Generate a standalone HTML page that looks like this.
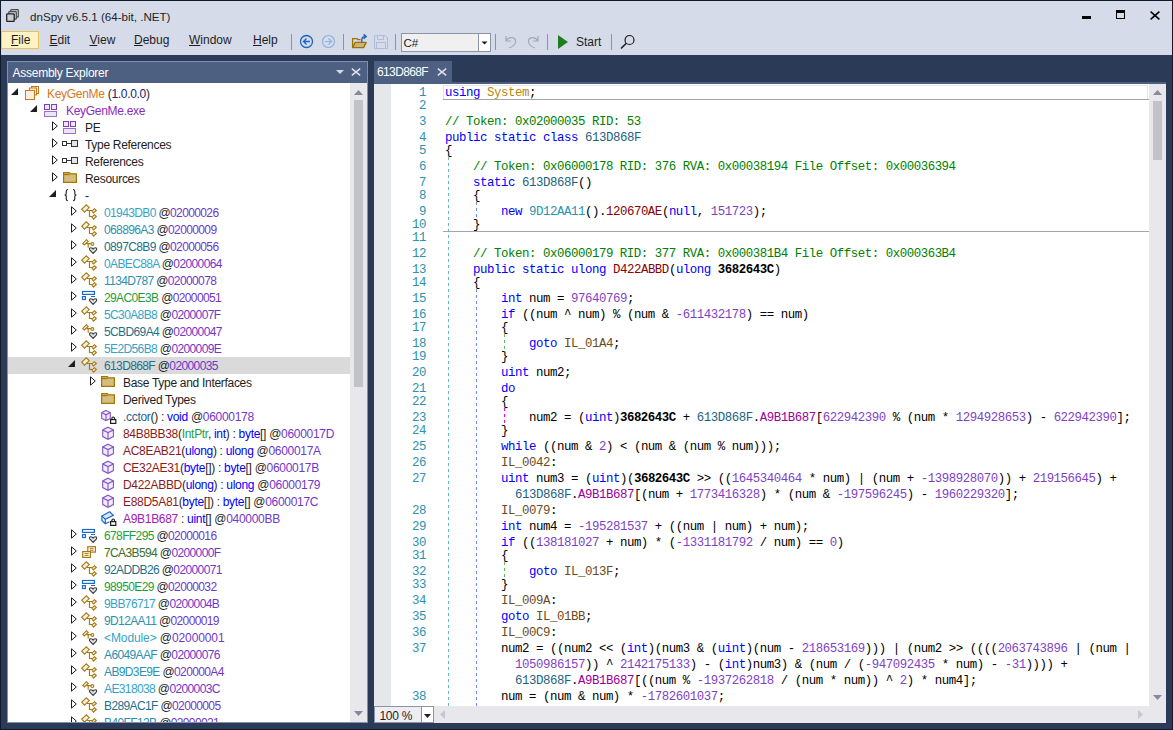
<!DOCTYPE html><html><head><meta charset="utf-8"><style>
*{margin:0;padding:0;box-sizing:border-box}
html,body{width:1173px;height:730px;overflow:hidden;background:#2a3a57}
body{position:relative;font-family:"Liberation Sans", sans-serif;font-size:12px}
.abs{position:absolute}
.t{position:absolute;white-space:pre;line-height:17px}
.code{position:absolute;white-space:pre;font-family:"Liberation Mono", monospace;font-size:12.4px;letter-spacing:-0.441px;line-height:16px}
.k{color:#0000ff} .c{color:#008000} .ty{color:#2b91af} .st{color:#1b6380} .m{color:#880000}
.n{color:#7f3fc4} .f{color:#990099} .lb{color:#6b4a1e} .ns{color:#b8860b} .b{font-weight:bold}
.ln{position:absolute;white-space:pre;font-family:"Liberation Mono", monospace;font-size:12.4px;letter-spacing:-0.441px;line-height:16px;color:#2b91af;text-align:right;width:40px}
u{text-decoration:underline;text-decoration-thickness:1px;text-underline-offset:1px}
</style></head><body>
<div class="abs" style="left:0;top:0;width:1173px;height:55px;background:#d6dbe9"></div>
<div class="abs" style="left:0;top:0;width:1173px;height:730px;border:1px solid #0f1a2a"></div>
<svg class="abs" style="left:6px;top:9px" width="14" height="14" viewBox="0 0 14 14">
<rect x="4.8" y="0.7" width="7.5" height="7.5" rx="0.6" fill="#d6dbe9" stroke="#4a4a4a" stroke-width="1.2"/>
<rect x="2.8" y="2.7" width="7.5" height="7.5" rx="0.6" fill="#d6dbe9" stroke="#4a4a4a" stroke-width="1.2"/>
<rect x="0.7" y="4.8" width="7.5" height="7.5" rx="0.6" fill="#c9cdd8" stroke="#222" stroke-width="1.3"/>
</svg>
<div class="t" style="left:30px;top:8px;font-size:11.6px;color:#1e1e1e">dnSpy v6.5.1 (64-bit, .NET)</div>
<div class="abs" style="left:1082px;top:16px;width:9px;height:3px;background:#000"></div>
<div class="abs" style="left:1116px;top:10px;width:9px;height:9px;border:1px solid #000;border-top-width:3px"></div>
<svg class="abs" style="left:1150px;top:11px" width="10" height="9" viewBox="0 0 10 9"><path d="M0.6 0.6 L9.4 8.4 M9.4 0.6 L0.6 8.4" stroke="#000" stroke-width="1.5"/></svg>
<div class="abs" style="left:1px;top:31px;width:38px;height:18px;background:#fff2c3;border:1px solid #e5c365"></div>
<div class="t" style="left:11px;top:32px;color:#1e1e1e"><u>F</u>ile</div>
<div class="t" style="left:49.5px;top:32px;color:#1e1e1e"><u>E</u>dit</div>
<div class="t" style="left:89.5px;top:32px;color:#1e1e1e"><u>V</u>iew</div>
<div class="t" style="left:134px;top:32px;color:#1e1e1e"><u>D</u>ebug</div>
<div class="t" style="left:189px;top:32px;color:#1e1e1e"><u>W</u>indow</div>
<div class="t" style="left:253px;top:32px;color:#1e1e1e"><u>H</u>elp</div>
<div class="abs" style="left:291px;top:34px;width:1px;height:16px;background:#8a93a8"></div>
<div class="abs" style="left:343px;top:34px;width:1px;height:16px;background:#8a93a8"></div>
<div class="abs" style="left:395px;top:34px;width:1px;height:16px;background:#8a93a8"></div>
<div class="abs" style="left:495px;top:34px;width:1px;height:16px;background:#8a93a8"></div>
<div class="abs" style="left:547px;top:34px;width:1px;height:16px;background:#8a93a8"></div>
<div class="abs" style="left:611px;top:34px;width:1px;height:16px;background:#8a93a8"></div>
<svg class="abs" style="left:299px;top:34px" width="16" height="16" viewBox="0 0 16 16">
<circle cx="7.5" cy="7.5" r="6" fill="none" stroke="#1b65c2" stroke-width="1.3"/>
<path d="M4.5 7.5 H11 M7.5 4.5 L4.5 7.5 L7.5 10.5" fill="none" stroke="#1b65c2" stroke-width="1.3"/></svg>
<svg class="abs" style="left:321px;top:34px" width="16" height="16" viewBox="0 0 16 16">
<circle cx="7.5" cy="7.5" r="6" fill="none" stroke="#8fb2e0" stroke-width="1.2"/>
<path d="M4 7.5 H10.5 M7.5 4.5 L10.5 7.5 L7.5 10.5" fill="none" stroke="#8fb2e0" stroke-width="1.2"/></svg>
<svg class="abs" style="left:351px;top:33px" width="16" height="16" viewBox="0 0 16 16">
<path d="M1.6 14.6 V5.6 H6 L7 6.6 H9.5" fill="none" stroke="#9a7000" stroke-width="1.3"/>
<path d="M1.6 14.6 L4.2 9.4 H15.2 L12.6 14.6 Z" fill="#c9b27c" stroke="#9a7000" stroke-width="1.3" stroke-linejoin="round"/>
<path d="M10.8 9 V7.2 C10.8 5 12 3.6 14 3.6" fill="none" stroke="#1b65c2" stroke-width="1.4"/>
<path d="M12.6 1.4 L15.2 3.6 L12.6 5.8" fill="none" stroke="#1b65c2" stroke-width="1.4"/></svg>
<svg class="abs" style="left:374px;top:35px" width="16" height="16" viewBox="0 0 16 16">
<path d="M0.5 0.5 H11 L13.5 3 V13.5 H0.5 Z" fill="none" stroke="#a9bfdc"/>
<rect x="3.5" y="0.5" width="6" height="4" fill="none" stroke="#a9bfdc"/>
<rect x="2.5" y="7.5" width="9" height="6" fill="none" stroke="#a9bfdc"/></svg>
<div class="abs" style="left:401px;top:33px;width:90px;height:19px;background:#f0f0f0;border:1px solid #8b93a8"></div>
<div class="abs" style="left:478px;top:34px;width:12px;height:17px;background:#fff;border-left:1px solid #8b93a8"></div>
<svg class="abs" style="left:481px;top:41px" width="8" height="5"><path d="M0.5 0.5 H6.5 L3.5 3.5 Z" fill="#1e1e1e"/></svg>
<div class="t" style="left:403.5px;top:34px;color:#1e1e1e;font-size:11.6px">C#</div>
<svg class="abs" style="left:503px;top:34px" width="16" height="16" viewBox="0 0 16 16">
<path d="M3 2 V7 H8 M3.5 6.5 C6 2 13 3 12.5 8 C12 11 9 13 6 14" fill="none" stroke="#a3a9b5" stroke-width="1.2"/></svg>
<svg class="abs" style="left:525px;top:34px" width="16" height="16" viewBox="0 0 16 16">
<path d="M13 2 V7 H8 M12.5 6.5 C10 2 3 3 3.5 8 C4 11 7 13 10 14" fill="none" stroke="#a3a9b5" stroke-width="1.2"/></svg>
<svg class="abs" style="left:557px;top:34px" width="12" height="16"><path d="M1 1 L11 8 L1 15 Z" fill="#1f7d1f"/></svg>
<div class="t" style="left:576px;top:34px;color:#1e1e1e">Start</div>
<svg class="abs" style="left:620px;top:34px" width="16" height="16" viewBox="0 0 16 16">
<circle cx="9.5" cy="6" r="4.5" fill="none" stroke="#1e1e1e" stroke-width="1.2"/>
<path d="M6.3 9.2 L1 14.5" stroke="#1e1e1e" stroke-width="1.6"/></svg>
<div class="abs" style="left:7px;top:61px;width:361px;height:662px;background:#fff;border:1px solid #7f90b4"></div>
<div class="abs" style="left:8px;top:62px;width:359px;height:21px;background:#4d6082"></div>
<div class="t" style="left:12.5px;top:65px;color:#fff;letter-spacing:-0.25px">Assembly Explorer</div>
<svg class="abs" style="left:336px;top:70px" width="8" height="4"><path d="M0 0 H8 L4 4 Z" fill="#d6dbe6"/></svg>
<svg class="abs" style="left:351px;top:68px" width="10" height="8" viewBox="0 0 10 8"><path d="M0.8 0.6 L9.2 7.4 M9.2 0.6 L0.8 7.4" stroke="#dde1ea" stroke-width="1.5"/></svg>
<div class="abs" style="left:350px;top:83px;width:17px;height:639px;background:#e8e8ec"></div>
<svg class="abs" style="left:354px;top:90px" width="9" height="5"><path d="M0 5 H9 L4.5 0 Z" fill="#868999"/></svg>
<div class="abs" style="left:354px;top:100px;width:9px;height:287px;background:#c2c3c9"></div>
<svg class="abs" style="left:354px;top:711px" width="9" height="5"><path d="M0 0 H9 L4.5 5 Z" fill="#868999"/></svg>
<div class="abs" style="left:8px;top:83px;width:342px;height:639px;overflow:hidden">
<svg class="abs" style="left:3px;top:5px" width="7" height="7"><path d="M7 0 V7 H0 Z" fill="#1e1e1e"/></svg>
<div class="abs" style="left:17px;top:2px"><svg width="14" height="15" viewBox="0 0 14 15"><rect x="6.5" y="1.5" width="7" height="7" fill="#faeee0" stroke="#c8791f"/><rect x="4.5" y="3" width="7" height="7" fill="#faeee0" stroke="#c8791f"/><rect x="0.5" y="5.5" width="9" height="9" fill="#faeee0" stroke="#c8791f"/></svg></div>
<div class="t" style="left:39px;top:3px;letter-spacing:-0.3px"><span style="color:#d2781e">KeyGenMe</span><span style="color:#1e1e1e"> (</span><span style="color:#202070">1.0.0.0</span><span style="color:#1e1e1e">)</span></div>
<svg class="abs" style="left:22px;top:22px" width="7" height="7"><path d="M7 0 V7 H0 Z" fill="#1e1e1e"/></svg>
<div class="abs" style="left:36px;top:19px"><svg width="14" height="16" viewBox="0 0 14 16"><rect x="0.5" y="2.5" width="5" height="5" fill="#ece6f5" stroke="#7b3fbf"/><rect x="7.5" y="2.5" width="5" height="5" fill="#ece6f5" stroke="#7b3fbf"/><rect x="0.5" y="9.5" width="12" height="5" fill="#ece6f5" stroke="#9a6fd0"/></svg></div>
<div class="t" style="left:58px;top:20px;letter-spacing:-0.3px"><span style="color:#8a2bbf">KeyGenMe.exe</span></div>
<svg class="abs" style="left:44px;top:38px" width="6" height="10"><path d="M0.5 0.8 L5.3 5 L0.5 9.2 Z" fill="none" stroke="#1e1e1e" stroke-width="1"/></svg>
<div class="abs" style="left:55px;top:36px"><svg width="14" height="16" viewBox="0 0 14 16"><rect x="0.5" y="2.5" width="5" height="5" fill="#ece6f5" stroke="#7b3fbf"/><rect x="7.5" y="2.5" width="5" height="5" fill="#ece6f5" stroke="#7b3fbf"/><rect x="0.5" y="9.5" width="12" height="5" fill="#ece6f5" stroke="#9a6fd0"/></svg></div>
<div class="t" style="left:77px;top:37px;letter-spacing:-0.3px"><span style="color:#1e1e1e">PE</span></div>
<svg class="abs" style="left:44px;top:55px" width="6" height="10"><path d="M0.5 0.8 L5.3 5 L0.5 9.2 Z" fill="none" stroke="#1e1e1e" stroke-width="1"/></svg>
<div class="abs" style="left:54px;top:53px"><svg width="17" height="17" viewBox="0 0 17 17"><rect x="0.5" y="5.5" width="4" height="4" fill="#fff" stroke="#333"/><path d="M4.5 7.5 H9.5" stroke="#333"/><rect x="9.5" y="4.5" width="6" height="6" fill="#e6e6e6" stroke="#333"/></svg></div>
<div class="t" style="left:77px;top:54px;letter-spacing:-0.3px"><span style="color:#1e1e1e">Type References</span></div>
<svg class="abs" style="left:44px;top:72px" width="6" height="10"><path d="M0.5 0.8 L5.3 5 L0.5 9.2 Z" fill="none" stroke="#1e1e1e" stroke-width="1"/></svg>
<div class="abs" style="left:54px;top:70px"><svg width="17" height="17" viewBox="0 0 17 17"><rect x="0.5" y="5.5" width="4" height="4" fill="#fff" stroke="#333"/><path d="M4.5 7.5 H9.5" stroke="#333"/><rect x="9.5" y="4.5" width="6" height="6" fill="#e6e6e6" stroke="#333"/></svg></div>
<div class="t" style="left:77px;top:71px;letter-spacing:-0.3px"><span style="color:#1e1e1e">References</span></div>
<svg class="abs" style="left:44px;top:89px" width="6" height="10"><path d="M0.5 0.8 L5.3 5 L0.5 9.2 Z" fill="none" stroke="#1e1e1e" stroke-width="1"/></svg>
<div class="abs" style="left:55px;top:87px"><svg width="17" height="17" viewBox="0 0 17 17"><path d="M0.6 2.6 H6.4 L7.4 3.8 H13.4 V12.4 H0.6 Z" fill="#d5bd80" stroke="#a37800" stroke-width="1.2"/><path d="M0.6 4.6 H6.6" stroke="#a37800" stroke-width="1.2"/></svg></div>
<div class="t" style="left:77px;top:88px;letter-spacing:-0.3px"><span style="color:#1e1e1e">Resources</span></div>
<svg class="abs" style="left:41px;top:107px" width="7" height="7"><path d="M7 0 V7 H0 Z" fill="#1e1e1e"/></svg>
<div class="abs" style="left:56px;top:106px"><svg width="14" height="14" viewBox="0 0 14 14"><path d="M3.8 0.5 C2.2 0.5 2.2 1.5 2.2 3 V4.8 C2.2 5.6 1.6 6 0.6 6 C1.6 6 2.2 6.4 2.2 7.2 V9.2 C2.2 10.7 2.2 11.6 3.8 11.6" fill="none" stroke="#1e1e1e" stroke-width="1.1"/><path d="M9.2 0.5 C10.8 0.5 10.8 1.5 10.8 3 V4.8 C10.8 5.6 11.4 6 12.4 6 C11.4 6 10.8 6.4 10.8 7.2 V9.2 C10.8 10.7 10.8 11.6 9.2 11.6" fill="none" stroke="#1e1e1e" stroke-width="1.1"/></svg></div>
<div class="t" style="left:77px;top:105px;letter-spacing:-0.3px"><span style="color:#1e1e1e">-</span></div>
<svg class="abs" style="left:63px;top:123px" width="6" height="10"><path d="M0.5 0.8 L5.3 5 L0.5 9.2 Z" fill="none" stroke="#1e1e1e" stroke-width="1"/></svg>
<div class="abs" style="left:73px;top:121px"><svg width="17" height="17" viewBox="0 0 17 17"><path d="M5.4 0.8 L8.2 3.6 L3.5 8.1 L0.7 5.2 Z" fill="#f3efe3" stroke="#a87a12" stroke-width="1.15"/><path d="M6 6.5 H11 M8.5 6.5 V12.5 H11" fill="none" stroke="#a87a12" stroke-width="1.2"/><path d="M13.4 4.7 L15.3 6.5 L12.4 8.9 L11 7.1 Z" fill="#f3efe3" stroke="#a87a12" stroke-width="1.15"/><path d="M13.4 10.7 L15.3 12.5 L12.5 15.1 L11 13.1 Z" fill="#f3efe3" stroke="#a87a12" stroke-width="1.15"/></svg></div>
<div class="t" style="left:96px;top:122px;letter-spacing:-0.62px"><span style="color:#36a3c6">01943DB0 </span><span style="color:#1e1e1e">@</span><span style="color:#7037c8">02000026</span></div>
<svg class="abs" style="left:63px;top:140px" width="6" height="10"><path d="M0.5 0.8 L5.3 5 L0.5 9.2 Z" fill="none" stroke="#1e1e1e" stroke-width="1"/></svg>
<div class="abs" style="left:73px;top:138px"><svg width="17" height="17" viewBox="0 0 17 17"><path d="M5.4 0.8 L8.2 3.6 L3.5 8.1 L0.7 5.2 Z" fill="#f3efe3" stroke="#a87a12" stroke-width="1.15"/><path d="M6 6.5 H11 M8.5 6.5 V12.5 H11" fill="none" stroke="#a87a12" stroke-width="1.2"/><path d="M13.4 4.7 L15.3 6.5 L12.4 8.9 L11 7.1 Z" fill="#f3efe3" stroke="#a87a12" stroke-width="1.15"/><path d="M13.4 10.7 L15.3 12.5 L12.5 15.1 L11 13.1 Z" fill="#f3efe3" stroke="#a87a12" stroke-width="1.15"/></svg></div>
<div class="t" style="left:96px;top:139px;letter-spacing:-0.62px"><span style="color:#2b91af">068896A3 </span><span style="color:#1e1e1e">@</span><span style="color:#7037c8">02000009</span></div>
<svg class="abs" style="left:63px;top:157px" width="6" height="10"><path d="M0.5 0.8 L5.3 5 L0.5 9.2 Z" fill="none" stroke="#1e1e1e" stroke-width="1"/></svg>
<div class="abs" style="left:73px;top:155px"><svg width="17" height="17" viewBox="0 0 17 17"><path d="M5.4 1.7 L7.2 3.4 L3.3 6.9 L1.8 5.4 Z" fill="#f3efe3" stroke="#a87a12" stroke-width="1.15"/><path d="M5.5 5.6 H10 M7.2 5.6 V9.8" fill="none" stroke="#a87a12" stroke-width="1.15"/><circle cx="11.4" cy="6" r="1.4" fill="none" stroke="#a87a12" stroke-width="1.1"/><path d="M12.1 15.4 L8.9 12.1 C8.1 11.1 8.5 9.7 9.9 9.8 C10.9 9.8 11.5 10.4 12.1 11 C12.7 10.4 13.3 9.8 14.3 9.8 C15.7 9.7 16.1 11.1 15.3 12.1 Z" fill="#e2e2e2" stroke="#3a3a3a" stroke-width="1.1"/></svg></div>
<div class="t" style="left:96px;top:156px;letter-spacing:-0.62px"><span style="color:#1f6f8b">0897C8B9 </span><span style="color:#1e1e1e">@</span><span style="color:#7037c8">02000056</span></div>
<svg class="abs" style="left:63px;top:174px" width="6" height="10"><path d="M0.5 0.8 L5.3 5 L0.5 9.2 Z" fill="none" stroke="#1e1e1e" stroke-width="1"/></svg>
<div class="abs" style="left:73px;top:172px"><svg width="17" height="17" viewBox="0 0 17 17"><path d="M5.4 0.8 L8.2 3.6 L3.5 8.1 L0.7 5.2 Z" fill="#f3efe3" stroke="#a87a12" stroke-width="1.15"/><path d="M6 6.5 H11 M8.5 6.5 V12.5 H11" fill="none" stroke="#a87a12" stroke-width="1.2"/><path d="M13.4 4.7 L15.3 6.5 L12.4 8.9 L11 7.1 Z" fill="#f3efe3" stroke="#a87a12" stroke-width="1.15"/><path d="M13.4 10.7 L15.3 12.5 L12.5 15.1 L11 13.1 Z" fill="#f3efe3" stroke="#a87a12" stroke-width="1.15"/></svg></div>
<div class="t" style="left:96px;top:173px;letter-spacing:-0.62px"><span style="color:#36a3c6">0ABEC88A </span><span style="color:#1e1e1e">@</span><span style="color:#7037c8">02000064</span></div>
<svg class="abs" style="left:63px;top:191px" width="6" height="10"><path d="M0.5 0.8 L5.3 5 L0.5 9.2 Z" fill="none" stroke="#1e1e1e" stroke-width="1"/></svg>
<div class="abs" style="left:73px;top:189px"><svg width="17" height="17" viewBox="0 0 17 17"><path d="M5.4 0.8 L8.2 3.6 L3.5 8.1 L0.7 5.2 Z" fill="#f3efe3" stroke="#a87a12" stroke-width="1.15"/><path d="M6 6.5 H11 M8.5 6.5 V12.5 H11" fill="none" stroke="#a87a12" stroke-width="1.2"/><path d="M13.4 4.7 L15.3 6.5 L12.4 8.9 L11 7.1 Z" fill="#f3efe3" stroke="#a87a12" stroke-width="1.15"/><path d="M13.4 10.7 L15.3 12.5 L12.5 15.1 L11 13.1 Z" fill="#f3efe3" stroke="#a87a12" stroke-width="1.15"/></svg></div>
<div class="t" style="left:96px;top:190px;letter-spacing:-0.62px"><span style="color:#2b91af">1134D787 </span><span style="color:#1e1e1e">@</span><span style="color:#7037c8">02000078</span></div>
<svg class="abs" style="left:63px;top:208px" width="6" height="10"><path d="M0.5 0.8 L5.3 5 L0.5 9.2 Z" fill="none" stroke="#1e1e1e" stroke-width="1"/></svg>
<div class="abs" style="left:73px;top:206px"><svg width="17" height="17" viewBox="0 0 17 17"><rect x="1.5" y="2.5" width="11.9" height="2.9" fill="#fff" stroke="#1b6ac9" stroke-width="1.2"/><rect x="1.5" y="7.6" width="2.9" height="2.9" fill="#fff" stroke="#1b6ac9" stroke-width="1.2"/><path d="M10 7.5 H14" stroke="#1b6ac9" stroke-width="1"/><path d="M12.1 15.4 L8.9 12.1 C8.1 11.1 8.5 9.7 9.9 9.8 C10.9 9.8 11.5 10.4 12.1 11 C12.7 10.4 13.3 9.8 14.3 9.8 C15.7 9.7 16.1 11.1 15.3 12.1 Z" fill="#e2e2e2" stroke="#3a3a3a" stroke-width="1.1"/></svg></div>
<div class="t" style="left:96px;top:207px;letter-spacing:-0.62px"><span style="color:#1e9e3e">29AC0E3B </span><span style="color:#1e1e1e">@</span><span style="color:#7037c8">02000051</span></div>
<svg class="abs" style="left:63px;top:225px" width="6" height="10"><path d="M0.5 0.8 L5.3 5 L0.5 9.2 Z" fill="none" stroke="#1e1e1e" stroke-width="1"/></svg>
<div class="abs" style="left:73px;top:223px"><svg width="17" height="17" viewBox="0 0 17 17"><path d="M5.4 0.8 L8.2 3.6 L3.5 8.1 L0.7 5.2 Z" fill="#f3efe3" stroke="#a87a12" stroke-width="1.15"/><path d="M6 6.5 H11 M8.5 6.5 V12.5 H11" fill="none" stroke="#a87a12" stroke-width="1.2"/><path d="M13.4 4.7 L15.3 6.5 L12.4 8.9 L11 7.1 Z" fill="#f3efe3" stroke="#a87a12" stroke-width="1.15"/><path d="M13.4 10.7 L15.3 12.5 L12.5 15.1 L11 13.1 Z" fill="#f3efe3" stroke="#a87a12" stroke-width="1.15"/></svg></div>
<div class="t" style="left:96px;top:224px;letter-spacing:-0.62px"><span style="color:#36a3c6">5C30A8B8 </span><span style="color:#1e1e1e">@</span><span style="color:#7037c8">0200007F</span></div>
<svg class="abs" style="left:63px;top:242px" width="6" height="10"><path d="M0.5 0.8 L5.3 5 L0.5 9.2 Z" fill="none" stroke="#1e1e1e" stroke-width="1"/></svg>
<div class="abs" style="left:73px;top:240px"><svg width="17" height="17" viewBox="0 0 17 17"><path d="M5.4 1.7 L7.2 3.4 L3.3 6.9 L1.8 5.4 Z" fill="#f3efe3" stroke="#a87a12" stroke-width="1.15"/><path d="M5.5 5.6 H10 M7.2 5.6 V9.8" fill="none" stroke="#a87a12" stroke-width="1.15"/><circle cx="11.4" cy="6" r="1.4" fill="none" stroke="#a87a12" stroke-width="1.1"/><path d="M12.1 15.4 L8.9 12.1 C8.1 11.1 8.5 9.7 9.9 9.8 C10.9 9.8 11.5 10.4 12.1 11 C12.7 10.4 13.3 9.8 14.3 9.8 C15.7 9.7 16.1 11.1 15.3 12.1 Z" fill="#e2e2e2" stroke="#3a3a3a" stroke-width="1.1"/></svg></div>
<div class="t" style="left:96px;top:241px;letter-spacing:-0.62px"><span style="color:#1f6f8b">5CBD69A4 </span><span style="color:#1e1e1e">@</span><span style="color:#7037c8">02000047</span></div>
<svg class="abs" style="left:63px;top:259px" width="6" height="10"><path d="M0.5 0.8 L5.3 5 L0.5 9.2 Z" fill="none" stroke="#1e1e1e" stroke-width="1"/></svg>
<div class="abs" style="left:73px;top:257px"><svg width="17" height="17" viewBox="0 0 17 17"><path d="M5.4 0.8 L8.2 3.6 L3.5 8.1 L0.7 5.2 Z" fill="#f3efe3" stroke="#a87a12" stroke-width="1.15"/><path d="M6 6.5 H11 M8.5 6.5 V12.5 H11" fill="none" stroke="#a87a12" stroke-width="1.2"/><path d="M13.4 4.7 L15.3 6.5 L12.4 8.9 L11 7.1 Z" fill="#f3efe3" stroke="#a87a12" stroke-width="1.15"/><path d="M13.4 10.7 L15.3 12.5 L12.5 15.1 L11 13.1 Z" fill="#f3efe3" stroke="#a87a12" stroke-width="1.15"/></svg></div>
<div class="t" style="left:96px;top:258px;letter-spacing:-0.62px"><span style="color:#36a3c6">5E2D56B8 </span><span style="color:#1e1e1e">@</span><span style="color:#7037c8">0200009E</span></div>
<div class="abs" style="left:0;top:274px;width:342px;height:17px;background:#dadada"></div>
<svg class="abs" style="left:60px;top:277px" width="7" height="7"><path d="M7 0 V7 H0 Z" fill="#1e1e1e"/></svg>
<div class="abs" style="left:73px;top:274px"><svg width="17" height="17" viewBox="0 0 17 17"><path d="M5.4 0.8 L8.2 3.6 L3.5 8.1 L0.7 5.2 Z" fill="#f3efe3" stroke="#a87a12" stroke-width="1.15"/><path d="M6 6.5 H11 M8.5 6.5 V12.5 H11" fill="none" stroke="#a87a12" stroke-width="1.2"/><path d="M13.4 4.7 L15.3 6.5 L12.4 8.9 L11 7.1 Z" fill="#f3efe3" stroke="#a87a12" stroke-width="1.15"/><path d="M13.4 10.7 L15.3 12.5 L12.5 15.1 L11 13.1 Z" fill="#f3efe3" stroke="#a87a12" stroke-width="1.15"/></svg></div>
<div class="t" style="left:96px;top:275px;letter-spacing:-0.62px"><span style="color:#1f6f8b">613D868F </span><span style="color:#1e1e1e">@</span><span style="color:#7037c8">02000035</span></div>
<svg class="abs" style="left:82px;top:293px" width="6" height="10"><path d="M0.5 0.8 L5.3 5 L0.5 9.2 Z" fill="none" stroke="#1e1e1e" stroke-width="1"/></svg>
<div class="abs" style="left:93px;top:291px"><svg width="17" height="17" viewBox="0 0 17 17"><path d="M0.6 2.6 H6.4 L7.4 3.8 H13.4 V12.4 H0.6 Z" fill="#d5bd80" stroke="#a37800" stroke-width="1.2"/><path d="M0.6 4.6 H6.6" stroke="#a37800" stroke-width="1.2"/></svg></div>
<div class="t" style="left:115px;top:292px;letter-spacing:-0.3px"><span style="color:#1e1e1e">Base Type and Interfaces</span></div>
<div class="abs" style="left:93px;top:308px"><svg width="17" height="17" viewBox="0 0 17 17"><path d="M0.6 2.6 H6.4 L7.4 3.8 H13.4 V12.4 H0.6 Z" fill="#d5bd80" stroke="#a37800" stroke-width="1.2"/><path d="M0.6 4.6 H6.6" stroke="#a37800" stroke-width="1.2"/></svg></div>
<div class="t" style="left:115px;top:309px;letter-spacing:-0.3px"><span style="color:#1e1e1e">Derived Types</span></div>
<div class="abs" style="left:93px;top:325px"><svg width="17" height="17" viewBox="0 0 17 17"><path d="M5 2.4 L9.3 4.6 V10.4 L5 12.6 L0.7 10.4 V4.6 Z" fill="#f1ecfa" stroke="#8454c8" stroke-width="1.1"/><path d="M0.7 4.6 L5 6.8 L9.3 4.6 M5 6.8 V12.6" fill="none" stroke="#8454c8" stroke-width="1.1"/><rect x="9.6" y="11.6" width="5.2" height="3.8" fill="#fff" stroke="#1e1e1e" stroke-width="1.2"/><path d="M10.9 11.6 V10.3 A1.3 1.3 0 0 1 13.5 10.3 V11.6" fill="none" stroke="#1e1e1e" stroke-width="1.2"/></svg></div>
<div class="t" style="left:115px;top:326px;letter-spacing:-0.3px"><span style="color:#1f5f8f">.cctor</span><span style="color:#1e1e1e">() : </span><span style="color:#0000ff">void</span><span style="color:#1e1e1e"> @</span><span style="color:#7037c8">06000178</span></div>
<div class="abs" style="left:93px;top:342px"><svg width="17" height="17" viewBox="0 0 17 17"><path d="M7 2.2 L12.4 4.9 V11.6 L7 14.3 L1.7 11.6 V4.9 Z" fill="#f1ecfa" stroke="#8454c8" stroke-width="1.1"/><path d="M1.7 4.9 L7 7.6 L12.4 4.9 M7 7.6 V14.3" fill="none" stroke="#8454c8" stroke-width="1.1"/></svg></div>
<div class="t" style="left:115px;top:343px;letter-spacing:-0.3px"><span style="color:#8b1a1a">84B8BB38</span><span style="color:#1e1e1e">(</span><span style="color:#1e9e3e">IntPtr</span><span style="color:#1e1e1e">, </span><span style="color:#0000ff">int</span><span style="color:#1e1e1e">) : </span><span style="color:#0000ff">byte</span><span style="color:#1e1e1e">[] @</span><span style="color:#7037c8">0600017D</span></div>
<div class="abs" style="left:93px;top:359px"><svg width="17" height="17" viewBox="0 0 17 17"><path d="M7 2.2 L12.4 4.9 V11.6 L7 14.3 L1.7 11.6 V4.9 Z" fill="#f1ecfa" stroke="#8454c8" stroke-width="1.1"/><path d="M1.7 4.9 L7 7.6 L12.4 4.9 M7 7.6 V14.3" fill="none" stroke="#8454c8" stroke-width="1.1"/></svg></div>
<div class="t" style="left:115px;top:360px;letter-spacing:-0.3px"><span style="color:#8b1a1a">AC8EAB21</span><span style="color:#1e1e1e">(</span><span style="color:#0000ff">ulong</span><span style="color:#1e1e1e">) : </span><span style="color:#0000ff">ulong</span><span style="color:#1e1e1e"> @</span><span style="color:#7037c8">0600017A</span></div>
<div class="abs" style="left:93px;top:376px"><svg width="17" height="17" viewBox="0 0 17 17"><path d="M7 2.2 L12.4 4.9 V11.6 L7 14.3 L1.7 11.6 V4.9 Z" fill="#f1ecfa" stroke="#8454c8" stroke-width="1.1"/><path d="M1.7 4.9 L7 7.6 L12.4 4.9 M7 7.6 V14.3" fill="none" stroke="#8454c8" stroke-width="1.1"/></svg></div>
<div class="t" style="left:115px;top:377px;letter-spacing:-0.3px"><span style="color:#8b1a1a">CE32AE31</span><span style="color:#1e1e1e">(</span><span style="color:#0000ff">byte</span><span style="color:#1e1e1e">[]) : </span><span style="color:#0000ff">byte</span><span style="color:#1e1e1e">[] @</span><span style="color:#7037c8">0600017B</span></div>
<div class="abs" style="left:93px;top:393px"><svg width="17" height="17" viewBox="0 0 17 17"><path d="M7 2.2 L12.4 4.9 V11.6 L7 14.3 L1.7 11.6 V4.9 Z" fill="#f1ecfa" stroke="#8454c8" stroke-width="1.1"/><path d="M1.7 4.9 L7 7.6 L12.4 4.9 M7 7.6 V14.3" fill="none" stroke="#8454c8" stroke-width="1.1"/></svg></div>
<div class="t" style="left:115px;top:394px;letter-spacing:-0.3px"><span style="color:#8b1a1a">D422ABBD</span><span style="color:#1e1e1e">(</span><span style="color:#0000ff">ulong</span><span style="color:#1e1e1e">) : </span><span style="color:#0000ff">ulong</span><span style="color:#1e1e1e"> @</span><span style="color:#7037c8">06000179</span></div>
<div class="abs" style="left:93px;top:410px"><svg width="17" height="17" viewBox="0 0 17 17"><path d="M7 2.2 L12.4 4.9 V11.6 L7 14.3 L1.7 11.6 V4.9 Z" fill="#f1ecfa" stroke="#8454c8" stroke-width="1.1"/><path d="M1.7 4.9 L7 7.6 L12.4 4.9 M7 7.6 V14.3" fill="none" stroke="#8454c8" stroke-width="1.1"/></svg></div>
<div class="t" style="left:115px;top:411px;letter-spacing:-0.3px"><span style="color:#8b1a1a">E88D5A81</span><span style="color:#1e1e1e">(</span><span style="color:#0000ff">byte</span><span style="color:#1e1e1e">[]) : </span><span style="color:#0000ff">byte</span><span style="color:#1e1e1e">[] @</span><span style="color:#7037c8">0600017C</span></div>
<div class="abs" style="left:93px;top:427px"><svg width="17" height="17" viewBox="0 0 17 17"><path d="M0.9 6.1 L8.6 1.8 L12.3 5.4 L4.3 9.3 Z" fill="#d9e8f8" stroke="#1b6ac9" stroke-width="1.2"/><path d="M0.9 6.1 V10.5 L4.3 13.8 L8.5 11.8 M4.3 9.3 V13.8" fill="none" stroke="#1b6ac9" stroke-width="1.2"/><rect x="9.6" y="11.6" width="5.2" height="3.8" fill="#fff" stroke="#1e1e1e" stroke-width="1.2"/><path d="M10.9 11.6 V10.3 A1.3 1.3 0 0 1 13.5 10.3 V11.6" fill="none" stroke="#1e1e1e" stroke-width="1.2"/></svg></div>
<div class="t" style="left:115px;top:428px;letter-spacing:-0.3px"><span style="color:#a020b0">A9B1B687</span><span style="color:#1e1e1e"> : </span><span style="color:#0000ff">uint</span><span style="color:#1e1e1e">[] @</span><span style="color:#7037c8">040000BB</span></div>
<svg class="abs" style="left:63px;top:446px" width="6" height="10"><path d="M0.5 0.8 L5.3 5 L0.5 9.2 Z" fill="none" stroke="#1e1e1e" stroke-width="1"/></svg>
<div class="abs" style="left:73px;top:444px"><svg width="17" height="17" viewBox="0 0 17 17"><rect x="1.5" y="2.5" width="11.9" height="2.9" fill="#fff" stroke="#1b6ac9" stroke-width="1.2"/><rect x="1.5" y="7.6" width="2.9" height="2.9" fill="#fff" stroke="#1b6ac9" stroke-width="1.2"/><path d="M10 7.5 H14" stroke="#1b6ac9" stroke-width="1"/><path d="M12.1 15.4 L8.9 12.1 C8.1 11.1 8.5 9.7 9.9 9.8 C10.9 9.8 11.5 10.4 12.1 11 C12.7 10.4 13.3 9.8 14.3 9.8 C15.7 9.7 16.1 11.1 15.3 12.1 Z" fill="#e2e2e2" stroke="#3a3a3a" stroke-width="1.1"/></svg></div>
<div class="t" style="left:96px;top:445px;letter-spacing:-0.62px"><span style="color:#1e9e3e">678FF295 </span><span style="color:#1e1e1e">@</span><span style="color:#7037c8">02000016</span></div>
<svg class="abs" style="left:63px;top:463px" width="6" height="10"><path d="M0.5 0.8 L5.3 5 L0.5 9.2 Z" fill="none" stroke="#1e1e1e" stroke-width="1"/></svg>
<div class="abs" style="left:73px;top:461px"><svg width="17" height="17" viewBox="0 0 17 17"><rect x="6.8" y="2.7" width="7.6" height="5.4" fill="#fff" stroke="#a87a12" stroke-width="1.2"/><path d="M8.7 4.6 H12.5 M8.7 6.3 H12.5" stroke="#a87a12" stroke-width="1"/><rect x="1.7" y="7.6" width="7.7" height="5.8" fill="#fff" stroke="#a87a12" stroke-width="1.2"/><path d="M3.5 9.6 H7.6 M3.5 11.4 H7.6" stroke="#a87a12" stroke-width="1"/></svg></div>
<div class="t" style="left:96px;top:462px;letter-spacing:-0.62px"><span style="color:#3a6e2a">7CA3B594 </span><span style="color:#1e1e1e">@</span><span style="color:#7037c8">0200000F</span></div>
<svg class="abs" style="left:63px;top:480px" width="6" height="10"><path d="M0.5 0.8 L5.3 5 L0.5 9.2 Z" fill="none" stroke="#1e1e1e" stroke-width="1"/></svg>
<div class="abs" style="left:73px;top:478px"><svg width="17" height="17" viewBox="0 0 17 17"><path d="M5.4 0.8 L8.2 3.6 L3.5 8.1 L0.7 5.2 Z" fill="#f3efe3" stroke="#a87a12" stroke-width="1.15"/><path d="M6 6.5 H11 M8.5 6.5 V12.5 H11" fill="none" stroke="#a87a12" stroke-width="1.2"/><path d="M13.4 4.7 L15.3 6.5 L12.4 8.9 L11 7.1 Z" fill="#f3efe3" stroke="#a87a12" stroke-width="1.15"/><path d="M13.4 10.7 L15.3 12.5 L12.5 15.1 L11 13.1 Z" fill="#f3efe3" stroke="#a87a12" stroke-width="1.15"/></svg></div>
<div class="t" style="left:96px;top:479px;letter-spacing:-0.62px"><span style="color:#1f6f8b">92ADDB26 </span><span style="color:#1e1e1e">@</span><span style="color:#7037c8">02000071</span></div>
<svg class="abs" style="left:63px;top:497px" width="6" height="10"><path d="M0.5 0.8 L5.3 5 L0.5 9.2 Z" fill="none" stroke="#1e1e1e" stroke-width="1"/></svg>
<div class="abs" style="left:73px;top:495px"><svg width="17" height="17" viewBox="0 0 17 17"><rect x="1.5" y="2.5" width="11.9" height="2.9" fill="#fff" stroke="#1b6ac9" stroke-width="1.2"/><rect x="1.5" y="7.6" width="2.9" height="2.9" fill="#fff" stroke="#1b6ac9" stroke-width="1.2"/><path d="M10 7.5 H14" stroke="#1b6ac9" stroke-width="1"/><path d="M12.1 15.4 L8.9 12.1 C8.1 11.1 8.5 9.7 9.9 9.8 C10.9 9.8 11.5 10.4 12.1 11 C12.7 10.4 13.3 9.8 14.3 9.8 C15.7 9.7 16.1 11.1 15.3 12.1 Z" fill="#e2e2e2" stroke="#3a3a3a" stroke-width="1.1"/></svg></div>
<div class="t" style="left:96px;top:496px;letter-spacing:-0.62px"><span style="color:#1e9e3e">98950E29 </span><span style="color:#1e1e1e">@</span><span style="color:#7037c8">02000032</span></div>
<svg class="abs" style="left:63px;top:514px" width="6" height="10"><path d="M0.5 0.8 L5.3 5 L0.5 9.2 Z" fill="none" stroke="#1e1e1e" stroke-width="1"/></svg>
<div class="abs" style="left:73px;top:512px"><svg width="17" height="17" viewBox="0 0 17 17"><path d="M5.4 0.8 L8.2 3.6 L3.5 8.1 L0.7 5.2 Z" fill="#f3efe3" stroke="#a87a12" stroke-width="1.15"/><path d="M6 6.5 H11 M8.5 6.5 V12.5 H11" fill="none" stroke="#a87a12" stroke-width="1.2"/><path d="M13.4 4.7 L15.3 6.5 L12.4 8.9 L11 7.1 Z" fill="#f3efe3" stroke="#a87a12" stroke-width="1.15"/><path d="M13.4 10.7 L15.3 12.5 L12.5 15.1 L11 13.1 Z" fill="#f3efe3" stroke="#a87a12" stroke-width="1.15"/></svg></div>
<div class="t" style="left:96px;top:513px;letter-spacing:-0.62px"><span style="color:#36a3c6">9BB76717 </span><span style="color:#1e1e1e">@</span><span style="color:#7037c8">0200004B</span></div>
<svg class="abs" style="left:63px;top:531px" width="6" height="10"><path d="M0.5 0.8 L5.3 5 L0.5 9.2 Z" fill="none" stroke="#1e1e1e" stroke-width="1"/></svg>
<div class="abs" style="left:73px;top:529px"><svg width="17" height="17" viewBox="0 0 17 17"><path d="M5.4 0.8 L8.2 3.6 L3.5 8.1 L0.7 5.2 Z" fill="#f3efe3" stroke="#a87a12" stroke-width="1.15"/><path d="M6 6.5 H11 M8.5 6.5 V12.5 H11" fill="none" stroke="#a87a12" stroke-width="1.2"/><path d="M13.4 4.7 L15.3 6.5 L12.4 8.9 L11 7.1 Z" fill="#f3efe3" stroke="#a87a12" stroke-width="1.15"/><path d="M13.4 10.7 L15.3 12.5 L12.5 15.1 L11 13.1 Z" fill="#f3efe3" stroke="#a87a12" stroke-width="1.15"/></svg></div>
<div class="t" style="left:96px;top:530px;letter-spacing:-0.62px"><span style="color:#2b91af">9D12AA11 </span><span style="color:#1e1e1e">@</span><span style="color:#7037c8">02000019</span></div>
<svg class="abs" style="left:63px;top:548px" width="6" height="10"><path d="M0.5 0.8 L5.3 5 L0.5 9.2 Z" fill="none" stroke="#1e1e1e" stroke-width="1"/></svg>
<div class="abs" style="left:73px;top:546px"><svg width="17" height="17" viewBox="0 0 17 17"><path d="M5.4 1.7 L7.2 3.4 L3.3 6.9 L1.8 5.4 Z" fill="#f3efe3" stroke="#a87a12" stroke-width="1.15"/><path d="M5.5 5.6 H10 M7.2 5.6 V9.8" fill="none" stroke="#a87a12" stroke-width="1.15"/><circle cx="11.4" cy="6" r="1.4" fill="none" stroke="#a87a12" stroke-width="1.1"/><path d="M12.1 15.4 L8.9 12.1 C8.1 11.1 8.5 9.7 9.9 9.8 C10.9 9.8 11.5 10.4 12.1 11 C12.7 10.4 13.3 9.8 14.3 9.8 C15.7 9.7 16.1 11.1 15.3 12.1 Z" fill="#e2e2e2" stroke="#3a3a3a" stroke-width="1.1"/></svg></div>
<div class="t" style="left:96px;top:547px;letter-spacing:-0.1px"><span style="color:#36a3c6">&lt;Module&gt; </span><span style="color:#1e1e1e">@</span><span style="color:#7037c8">02000001</span></div>
<svg class="abs" style="left:63px;top:565px" width="6" height="10"><path d="M0.5 0.8 L5.3 5 L0.5 9.2 Z" fill="none" stroke="#1e1e1e" stroke-width="1"/></svg>
<div class="abs" style="left:73px;top:563px"><svg width="17" height="17" viewBox="0 0 17 17"><path d="M5.4 0.8 L8.2 3.6 L3.5 8.1 L0.7 5.2 Z" fill="#f3efe3" stroke="#a87a12" stroke-width="1.15"/><path d="M6 6.5 H11 M8.5 6.5 V12.5 H11" fill="none" stroke="#a87a12" stroke-width="1.2"/><path d="M13.4 4.7 L15.3 6.5 L12.4 8.9 L11 7.1 Z" fill="#f3efe3" stroke="#a87a12" stroke-width="1.15"/><path d="M13.4 10.7 L15.3 12.5 L12.5 15.1 L11 13.1 Z" fill="#f3efe3" stroke="#a87a12" stroke-width="1.15"/></svg></div>
<div class="t" style="left:96px;top:564px;letter-spacing:-0.62px"><span style="color:#2b91af">A6049AAF </span><span style="color:#1e1e1e">@</span><span style="color:#7037c8">02000076</span></div>
<svg class="abs" style="left:63px;top:582px" width="6" height="10"><path d="M0.5 0.8 L5.3 5 L0.5 9.2 Z" fill="none" stroke="#1e1e1e" stroke-width="1"/></svg>
<div class="abs" style="left:73px;top:580px"><svg width="17" height="17" viewBox="0 0 17 17"><path d="M5.4 0.8 L8.2 3.6 L3.5 8.1 L0.7 5.2 Z" fill="#f3efe3" stroke="#a87a12" stroke-width="1.15"/><path d="M6 6.5 H11 M8.5 6.5 V12.5 H11" fill="none" stroke="#a87a12" stroke-width="1.2"/><path d="M13.4 4.7 L15.3 6.5 L12.4 8.9 L11 7.1 Z" fill="#f3efe3" stroke="#a87a12" stroke-width="1.15"/><path d="M13.4 10.7 L15.3 12.5 L12.5 15.1 L11 13.1 Z" fill="#f3efe3" stroke="#a87a12" stroke-width="1.15"/></svg></div>
<div class="t" style="left:96px;top:581px;letter-spacing:-0.62px"><span style="color:#2b91af">AB9D3E9E </span><span style="color:#1e1e1e">@</span><span style="color:#7037c8">020000A4</span></div>
<svg class="abs" style="left:63px;top:599px" width="6" height="10"><path d="M0.5 0.8 L5.3 5 L0.5 9.2 Z" fill="none" stroke="#1e1e1e" stroke-width="1"/></svg>
<div class="abs" style="left:73px;top:597px"><svg width="17" height="17" viewBox="0 0 17 17"><path d="M5.4 1.7 L7.2 3.4 L3.3 6.9 L1.8 5.4 Z" fill="#f3efe3" stroke="#a87a12" stroke-width="1.15"/><path d="M5.5 5.6 H10 M7.2 5.6 V9.8" fill="none" stroke="#a87a12" stroke-width="1.15"/><circle cx="11.4" cy="6" r="1.4" fill="none" stroke="#a87a12" stroke-width="1.1"/><path d="M12.1 15.4 L8.9 12.1 C8.1 11.1 8.5 9.7 9.9 9.8 C10.9 9.8 11.5 10.4 12.1 11 C12.7 10.4 13.3 9.8 14.3 9.8 C15.7 9.7 16.1 11.1 15.3 12.1 Z" fill="#e2e2e2" stroke="#3a3a3a" stroke-width="1.1"/></svg></div>
<div class="t" style="left:96px;top:598px;letter-spacing:-0.62px"><span style="color:#36a3c6">AE318038 </span><span style="color:#1e1e1e">@</span><span style="color:#7037c8">0200003C</span></div>
<svg class="abs" style="left:63px;top:616px" width="6" height="10"><path d="M0.5 0.8 L5.3 5 L0.5 9.2 Z" fill="none" stroke="#1e1e1e" stroke-width="1"/></svg>
<div class="abs" style="left:73px;top:614px"><svg width="17" height="17" viewBox="0 0 17 17"><path d="M5.4 0.8 L8.2 3.6 L3.5 8.1 L0.7 5.2 Z" fill="#f3efe3" stroke="#a87a12" stroke-width="1.15"/><path d="M6 6.5 H11 M8.5 6.5 V12.5 H11" fill="none" stroke="#a87a12" stroke-width="1.2"/><path d="M13.4 4.7 L15.3 6.5 L12.4 8.9 L11 7.1 Z" fill="#f3efe3" stroke="#a87a12" stroke-width="1.15"/><path d="M13.4 10.7 L15.3 12.5 L12.5 15.1 L11 13.1 Z" fill="#f3efe3" stroke="#a87a12" stroke-width="1.15"/></svg></div>
<div class="t" style="left:96px;top:615px;letter-spacing:-0.62px"><span style="color:#1f6f8b">B289AC1F </span><span style="color:#1e1e1e">@</span><span style="color:#7037c8">02000005</span></div>
<svg class="abs" style="left:63px;top:633px" width="6" height="10"><path d="M0.5 0.8 L5.3 5 L0.5 9.2 Z" fill="none" stroke="#1e1e1e" stroke-width="1"/></svg>
<div class="abs" style="left:73px;top:631px"><svg width="17" height="17" viewBox="0 0 17 17"><path d="M5.4 0.8 L8.2 3.6 L3.5 8.1 L0.7 5.2 Z" fill="#f3efe3" stroke="#a87a12" stroke-width="1.15"/><path d="M6 6.5 H11 M8.5 6.5 V12.5 H11" fill="none" stroke="#a87a12" stroke-width="1.2"/><path d="M13.4 4.7 L15.3 6.5 L12.4 8.9 L11 7.1 Z" fill="#f3efe3" stroke="#a87a12" stroke-width="1.15"/><path d="M13.4 10.7 L15.3 12.5 L12.5 15.1 L11 13.1 Z" fill="#f3efe3" stroke="#a87a12" stroke-width="1.15"/></svg></div>
<div class="t" style="left:96px;top:632px;letter-spacing:-0.62px"><span style="color:#2b91af">B40FF12B </span><span style="color:#1e1e1e">@</span><span style="color:#7037c8">02000021</span></div>
</div>
<div class="abs" style="left:374px;top:61px;width:78px;height:22px;background:#4d6082"></div>
<div class="t" style="left:377px;top:64px;color:#fff;letter-spacing:-0.62px">613D868F</div>
<svg class="abs" style="left:437px;top:68px" width="10" height="8" viewBox="0 0 10 8"><path d="M0.8 0.6 L9.2 7.4 M9.2 0.6 L0.8 7.4" stroke="#dde1ea" stroke-width="1.5"/></svg>
<div class="abs" style="left:374px;top:82px;width:792px;height:2px;background:#4d6082"></div>
<div class="abs" style="left:374px;top:84px;width:792px;height:639px;background:#fff"></div>
<div class="abs" style="left:374px;top:84px;width:17px;height:622px;background:#e6e7e8"></div>
<div class="abs" style="left:1149px;top:84px;width:17px;height:622px;background:#e8e8ec"></div>
<svg class="abs" style="left:1153px;top:90px" width="9" height="5"><path d="M0 5 H9 L4.5 0 Z" fill="#868999"/></svg>
<div class="abs" style="left:1153px;top:101px;width:9px;height:59px;background:#c2c3c9"></div>
<svg class="abs" style="left:1153px;top:695px" width="9" height="5"><path d="M0 0 H9 L4.5 5 Z" fill="#868999"/></svg>
<div class="abs" style="left:374px;top:706px;width:792px;height:17px;background:#e8e8ec"></div>
<div class="abs" style="left:374px;top:706px;width:60px;height:17px;background:#eeeef2;border:1px solid #8b93a8"></div>
<div class="abs" style="left:421px;top:707px;width:12px;height:15px;background:#fff;border-left:1px solid #8b93a8"></div>
<svg class="abs" style="left:424px;top:714px" width="7" height="4"><path d="M0 0 H7 L3.5 4 Z" fill="#1e1e1e"/></svg>
<div class="t" style="left:379.5px;top:707.5px;color:#1e1e1e;letter-spacing:-0.3px">100 %</div>
<svg class="abs" style="left:440px;top:710px" width="5" height="9"><path d="M5 0 V9 L0 4.5 Z" fill="#c5c7d0"/></svg>
<svg class="abs" style="left:1138px;top:710px" width="5" height="9"><path d="M0 0 V9 L5 4.5 Z" fill="#c5c7d0"/></svg>
<div class="abs" style="left:374px;top:84px;width:775px;height:622px;overflow:hidden">
<div class="abs" style="left:69px;top:1px;width:705px;height:15px;border:1px solid #e4e4ec;border-bottom:none"></div>
<div class="abs" style="left:69px;top:15px;width:706px;height:1px;background:#a5a5a5"></div>
<div class="abs" style="left:74px;top:73px;width:1px;height:549px;background:linear-gradient(#64b4d2 0 3px, transparent 3px 6px);background-size:1px 6px"></div>
<div class="abs" style="left:102px;top:118px;width:1px;height:16px;background:linear-gradient(#6e8cff 0 3px, transparent 3px 6px);background-size:1px 6px"></div>
<div class="abs" style="left:102px;top:205px;width:1px;height:417px;background:linear-gradient(#6e8cff 0 3px, transparent 3px 6px);background-size:1px 6px"></div>
<div class="abs" style="left:130px;top:250px;width:1px;height:16px;background:linear-gradient(#5cbf5c 0 3px, transparent 3px 6px);background-size:1px 6px"></div>
<div class="abs" style="left:130px;top:324px;width:1px;height:16px;background:linear-gradient(#ff00ff 0 3px, transparent 3px 6px);background-size:1px 6px"></div>
<div class="abs" style="left:130px;top:478px;width:1px;height:16px;background:linear-gradient(#5cbf5c 0 3px, transparent 3px 6px);background-size:1px 6px"></div>
<div class="abs" style="left:69px;top:147px;width:706px;height:1px;background:#a5a5a5"></div>
<div class="ln" style="left:12px;top:1px">1</div>
<div class="code" style="left:71px;top:1px"><span class="k">using</span> <span class="ns">System</span>;</div>
<div class="ln" style="left:12px;top:14px">2</div>
<div class="ln" style="left:12px;top:30px">3</div>
<div class="code" style="left:71px;top:30px"><span class="c">// Token: 0x02000035 RID: 53</span></div>
<div class="ln" style="left:12px;top:46px">4</div>
<div class="code" style="left:71px;top:46px"><span class="k">public</span> <span class="k">static</span> <span class="k">class</span> <span class="st">613D868F</span></div>
<div class="ln" style="left:12px;top:59px">5</div>
<div class="code" style="left:71px;top:59px">{</div>
<div class="ln" style="left:12px;top:75px">6</div>
<div class="code" style="left:71px;top:75px">    <span class="c">// Token: 0x06000178 RID: 376 RVA: 0x00038194 File Offset: 0x00036394</span></div>
<div class="ln" style="left:12px;top:91px">7</div>
<div class="code" style="left:71px;top:91px">    <span class="k">static</span> <span class="st">613D868F</span>()</div>
<div class="ln" style="left:12px;top:104px">8</div>
<div class="code" style="left:71px;top:104px">    {</div>
<div class="ln" style="left:12px;top:120px">9</div>
<div class="code" style="left:71px;top:120px">        <span class="k">new</span> <span class="ty">9D12AA11</span>().<span class="m">120670AE</span>(<span class="k">null</span>, <span class="n">151723</span>);</div>
<div class="ln" style="left:12px;top:133px">10</div>
<div class="code" style="left:71px;top:133px">    }</div>
<div class="ln" style="left:12px;top:146px">11</div>
<div class="ln" style="left:12px;top:162px">12</div>
<div class="code" style="left:71px;top:162px">    <span class="c">// Token: 0x06000179 RID: 377 RVA: 0x000381B4 File Offset: 0x000363B4</span></div>
<div class="ln" style="left:12px;top:178px">13</div>
<div class="code" style="left:71px;top:178px">    <span class="k">public</span> <span class="k">static</span> <span class="k">ulong</span> <span class="m">D422ABBD</span>(<span class="k">ulong</span> <span class="b">3682643C</span>)</div>
<div class="ln" style="left:12px;top:191px">14</div>
<div class="code" style="left:71px;top:191px">    {</div>
<div class="ln" style="left:12px;top:207px">15</div>
<div class="code" style="left:71px;top:207px">        <span class="k">int</span> num = <span class="n">97640769</span>;</div>
<div class="ln" style="left:12px;top:223px">16</div>
<div class="code" style="left:71px;top:223px">        <span class="k">if</span> ((num ^ num) % (num &amp; <span class="n">-611432178</span>) == num)</div>
<div class="ln" style="left:12px;top:236px">17</div>
<div class="code" style="left:71px;top:236px">        {</div>
<div class="ln" style="left:12px;top:252px">18</div>
<div class="code" style="left:71px;top:252px">            <span class="k">goto</span> <span class="lb">IL_01A4</span>;</div>
<div class="ln" style="left:12px;top:265px">19</div>
<div class="code" style="left:71px;top:265px">        }</div>
<div class="ln" style="left:12px;top:281px">20</div>
<div class="code" style="left:71px;top:281px">        <span class="k">uint</span> num2;</div>
<div class="ln" style="left:12px;top:297px">21</div>
<div class="code" style="left:71px;top:297px">        <span class="k">do</span></div>
<div class="ln" style="left:12px;top:310px">22</div>
<div class="code" style="left:71px;top:310px">        {</div>
<div class="ln" style="left:12px;top:326px">23</div>
<div class="code" style="left:71px;top:326px">            num2 = (<span class="k">uint</span>)<span class="b">3682643C</span> + <span class="st">613D868F</span>.<span class="f">A9B1B687</span>[<span class="n">622942390</span> % (num * <span class="n">1294928653</span>) - <span class="n">622942390</span>];</div>
<div class="ln" style="left:12px;top:339px">24</div>
<div class="code" style="left:71px;top:339px">        }</div>
<div class="ln" style="left:12px;top:355px">25</div>
<div class="code" style="left:71px;top:355px">        <span class="k">while</span> ((num &amp; <span class="n">2</span>) &lt; (num &amp; (num % num)));</div>
<div class="ln" style="left:12px;top:371px">26</div>
<div class="code" style="left:71px;top:371px">        <span class="lb">IL_0042</span>:</div>
<div class="ln" style="left:12px;top:387px">27</div>
<div class="code" style="left:71px;top:387px">        <span class="k">uint</span> num3 = (<span class="k">uint</span>)(<span class="b">3682643C</span> &gt;&gt; ((<span class="n">1645340464</span> * num) | (num + <span class="n">-1398928070</span>)) + <span class="n">219156645</span>) +</div>
<div class="code" style="left:71px;top:403px">          <span class="st">613D868F</span>.<span class="f">A9B1B687</span>[(num + <span class="n">1773416328</span>) * (num &amp; <span class="n">-197596245</span>) - <span class="n">1960229320</span>];</div>
<div class="ln" style="left:12px;top:419px">28</div>
<div class="code" style="left:71px;top:419px">        <span class="lb">IL_0079</span>:</div>
<div class="ln" style="left:12px;top:435px">29</div>
<div class="code" style="left:71px;top:435px">        <span class="k">int</span> num4 = <span class="n">-195281537</span> + ((num | num) + num);</div>
<div class="ln" style="left:12px;top:451px">30</div>
<div class="code" style="left:71px;top:451px">        <span class="k">if</span> ((<span class="n">138181027</span> + num) * (<span class="n">-1331181792</span> / num) == <span class="n">0</span>)</div>
<div class="ln" style="left:12px;top:464px">31</div>
<div class="code" style="left:71px;top:464px">        {</div>
<div class="ln" style="left:12px;top:480px">32</div>
<div class="code" style="left:71px;top:480px">            <span class="k">goto</span> <span class="lb">IL_013F</span>;</div>
<div class="ln" style="left:12px;top:493px">33</div>
<div class="code" style="left:71px;top:493px">        }</div>
<div class="ln" style="left:12px;top:509px">34</div>
<div class="code" style="left:71px;top:509px">        <span class="lb">IL_009A</span>:</div>
<div class="ln" style="left:12px;top:525px">35</div>
<div class="code" style="left:71px;top:525px">        <span class="k">goto</span> <span class="lb">IL_01BB</span>;</div>
<div class="ln" style="left:12px;top:541px">36</div>
<div class="code" style="left:71px;top:541px">        <span class="lb">IL_00C9</span>:</div>
<div class="ln" style="left:12px;top:557px">37</div>
<div class="code" style="left:71px;top:557px">        num2 = ((num2 &lt;&lt; (<span class="k">int</span>)(num3 &amp; (<span class="k">uint</span>)(num - <span class="n">218653169</span>))) | (num2 &gt;&gt; ((((<span class="n">2063743896</span> | (num |</div>
<div class="code" style="left:71px;top:573px">          <span class="n">1050986157</span>)) ^ <span class="n">2142175133</span>) - (<span class="k">int</span>)num3) &amp; (num / (<span class="n">-947092435</span> * num) - <span class="n">-31</span>)))) +</div>
<div class="code" style="left:71px;top:589px">          <span class="st">613D868F</span>.<span class="f">A9B1B687</span>[((num % <span class="n">-1937262818</span> / (num * num)) ^ <span class="n">2</span>) * num4];</div>
<div class="ln" style="left:12px;top:605px">38</div>
<div class="code" style="left:71px;top:605px">        num = (num &amp; num) * <span class="n">-1782601037</span>;</div>
</div>
</body></html>
